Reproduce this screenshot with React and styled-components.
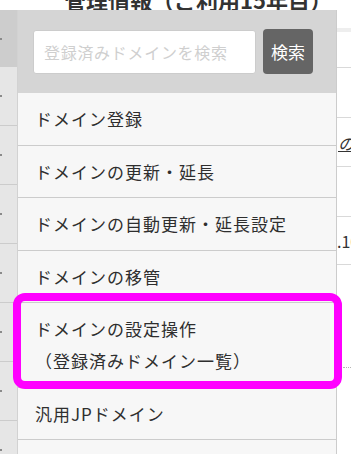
import React from "react";
import styled, { createGlobalStyle } from "styled-components";

const GlobalStyle = createGlobalStyle`
  html, body {
    margin: 0;
    padding: 0;
    background: #ffffff;
  }
  body {
    font-family: "Noto Sans CJK JP", "Noto Sans", sans-serif;
    color: #333333;
    overflow: hidden;
  }
`;

const Page = styled.div`
  width: 351px;
  height: 454px;
  overflow: hidden;
`;

const TitleBar = styled.div`
  height: 10px;
  overflow: hidden;
  display: flex;
  align-items: flex-end;
  padding-left: 64px;
`;

const Title = styled.h1`
  margin: 0;
  font-size: 22px;
  line-height: 22px;
  font-weight: 700;
  color: #333333;
  white-space: nowrap;
`;

const Body = styled.div`
  display: grid;
  grid-template-columns: 18px 319px 14px;
  height: 444px;
`;

const SideNav = styled.div`
  display: flex;
  flex-direction: column;
  background: #e6e6e6;
  border-right: 1px solid #d2d2d2;
  box-sizing: border-box;
`;

const SideRow = styled.div`
  display: flex;
  align-items: center;
  flex: 0 0 auto;
  height: ${(p) => p.$h}px;
  background: ${(p) => (p.$dark ? "#cdcdcd" : "transparent")};
  border-bottom: ${(p) => (p.$dark ? "none" : "1px solid #cccccc")};
`;

const Chevron = styled.span`
  width: 2px;
  height: 2px;
  background: #8a8a8a;
`;

const Panel = styled.div`
  position: relative;
  z-index: 2;
  background: #f7f7f7;
  border-right: 1px solid #cccccc;
`;

const SearchBar = styled.form`
  display: flex;
  align-items: flex-start;
  gap: 7px;
  height: 83px;
  box-sizing: border-box;
  padding: 20px 0 0 15px;
  background: #d5d5d5;
`;

const SearchInput = styled.input`
  width: 223px;
  height: 44px;
  box-sizing: border-box;
  border: 1px solid #cccccc;
  border-radius: 3px;
  background: #ffffff;
  padding: 0 10px;
  font-family: inherit;
  font-size: 16px;
  letter-spacing: 0.7px;
  color: #333333;
  outline: none;
  &::placeholder {
    color: #cfcfcf;
  }
`;

const SearchButton = styled.button`
  width: 50px;
  height: 45px;
  margin-top: -1px;
  border: none;
  border-radius: 4px;
  background: #656565;
  color: #ffffff;
  font-family: inherit;
  font-size: 17px;
  padding: 0;
`;

const MenuList = styled.ul`
  list-style: none;
  margin: 0;
  padding: 0;
`;

const MenuItem = styled.li`
  position: relative;
  padding: 14px 0 13.5px 17px;
  border-bottom: 1px solid #cccccc;
  font-size: 17px;
  line-height: 24px;
  letter-spacing: 1px;
  color: #2e2e2e;
  white-space: nowrap;

  ${(p) =>
    p.$marked &&
    `
    &::after {
      content: "";
      position: absolute;
      left: -5px;
      right: -6px;
      top: -10px;
      bottom: -2px;
      border: 8px solid #ff00ff;
      border-radius: 12px;
      pointer-events: none;
    }
  `}
`;

const SubLine = styled.span`
  display: block;
  margin-top: 8px;
`;

const Backdrop = styled.div`
  display: flex;
  flex-direction: column;
  overflow: hidden;
  white-space: nowrap;
`;

const BackRow = styled.div`
  display: flex;
  align-items: center;
  flex: 0 0 auto;
  height: ${(p) => p.$h}px;
  background: ${(p) => p.$bg || "transparent"};
  border-bottom: ${(p) => p.$line || "none"};
  margin-left: ${(p) => p.$indent || 0}px;
  font-size: 16px;
  color: #333333;
`;

const BackLink = styled.span`
  font-style: italic;
  text-decoration: underline;
  padding-top: 2px;
  margin-left: 1px;
`;

const menu = [
  { label: "ドメイン登録" },
  { label: "ドメインの更新・延長" },
  { label: "ドメインの自動更新・延長設定" },
  { label: "ドメインの移管" },
  { label: "ドメインの設定操作", sub: "（登録済みドメイン一覧）", marked: true },
  { label: "汎用JPドメイン" },
  { label: "属性型JPドメイン" },
];

export default function App() {
  return (
    <Page>
      <GlobalStyle />
      <TitleBar>
        <Title>管理情報（ご利用15年目）</Title>
      </TitleBar>
      <Body>
        <SideNav>
          <SideRow $h={57} $dark>
            <Chevron />
          </SideRow>
          {Array.from({ length: 7 }).map((_, i) => (
            <SideRow key={i} $h={58}>
              <Chevron />
            </SideRow>
          ))}
        </SideNav>

        <Panel>
          <SearchBar onSubmit={(e) => e.preventDefault()}>
            <SearchInput placeholder="登録済みドメインを検索" />
            <SearchButton type="submit">検索</SearchButton>
          </SearchBar>
          <MenuList>
            {menu.map((item) => (
              <MenuItem key={item.label} $marked={item.marked}>
                {item.label}
                {item.sub && <SubLine>{item.sub}</SubLine>}
              </MenuItem>
            ))}
          </MenuList>
        </Panel>

        <Backdrop>
          <BackRow $h={18} />
          <BackRow $h={4} $bg="#eeeeee" />
          <BackRow $h={35} $line="1px solid #d9d9d9" />
          <BackRow $h={49} $line="1px solid #d9d9d9" />
          <BackRow $h={48} $line="1px solid #d9d9d9">
            <BackLink>のご案内</BackLink>
          </BackRow>
          <BackRow $h={49} $line="1px solid #d9d9d9" />
          <BackRow $h={47} $line="1px solid #d9d9d9">
            .10.01
          </BackRow>
          <BackRow $h={102} $line="1px dotted #b5b5b5" $indent={6} />
        </Backdrop>
      </Body>
    </Page>
  );
}
